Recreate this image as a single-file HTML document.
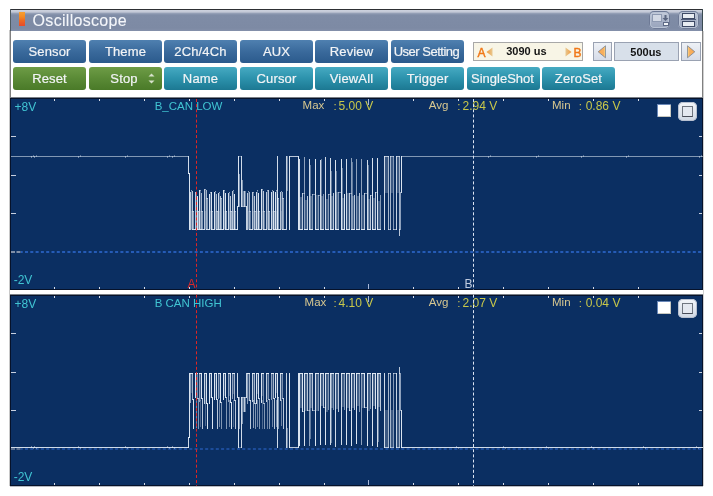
<!DOCTYPE html><html><head><meta charset="utf-8"><style>html,body{margin:0;padding:0;background:#fff;width:713px;height:496px;overflow:hidden;position:relative}#root{position:absolute;left:0;top:0;width:713px;height:496px;will-change:transform}</style></head><body><div id="root">
<div style="position:absolute;left:10px;top:9px;width:693px;height:1px;background:#2e3034"></div>
<div style="position:absolute;left:10px;top:9px;width:1px;height:22px;background:#4e5a60"></div>
<div style="position:absolute;left:10px;top:31px;width:1px;height:455px;background:#808080"></div>
<div style="position:absolute;left:702px;top:9px;width:1px;height:22px;background:#3a4a50"></div>
<div style="position:absolute;left:702px;top:31px;width:1px;height:455px;background:#808080"></div>
<div style="position:absolute;left:703px;top:31px;width:1px;height:455px;background:#d0d0d0"></div>
<div style="position:absolute;left:9px;top:30px;width:1px;height:456px;background:#c8c8c8"></div>
<div style="position:absolute;left:10px;top:486px;width:693px;height:1px;background:#b8bcc4"></div>
<div style="position:absolute;left:11px;top:10px;width:691px;height:21px;background:linear-gradient(#cdd2de 0px,#c3c8d6 2px,#939eb5 3.5px,#7f8ca6 5px,#7d8aa4 18px,#8490aa 21px)"></div>
<div style="position:absolute;left:19px;top:12px;width:6px;height:14px;background:linear-gradient(#f8a030,#f28a24 35%,#ee6a22 60%,#e84a2a)"></div>
<div style="position:absolute;left:32.60px;top:12.96px;font:normal 16px/16px 'Liberation Sans', sans-serif;color:#f4f6fa;white-space:nowrap;letter-spacing:0.3px;-webkit-text-stroke:0.1px #f4f6fa">Oscilloscope</div>
<div style="position:absolute;left:649px;top:11px;width:21px;height:18px;border-radius:5px;background:linear-gradient(#c8d0de,#a4aec4 60%,#96a2ba);box-shadow:inset 0 0 0 1px #6e7a96, inset 0 0 0 2px #b8c2d4"></div>
<div style="position:absolute;left:678px;top:11px;width:21px;height:18px;border-radius:5px;background:linear-gradient(#c8d0de,#a4aec4 60%,#96a2ba);box-shadow:inset 0 0 0 1px #6e7a96, inset 0 0 0 2px #b8c2d4"></div>
<div style="position:absolute;left:652px;top:14px;width:10px;height:8px;background:#d2d8e4;border:1px solid #8e9ab2;box-sizing:border-box"></div>
<div style="position:absolute;left:663px;top:22px;width:6px;height:4px;background:#f2f5f9;border:1px solid #5e6a86;box-sizing:border-box"></div>
<svg style="position:absolute;left:662px;top:15px" width="7" height="7"><path d="M2.5 0v3H0.5L3.5 6L6.5 3H4.5V0z" fill="#5a6680"/></svg>
<div style="position:absolute;left:682px;top:13px;width:13px;height:6px;background:#e8ecf2;border:1px solid #3e4a66;box-sizing:border-box"></div>
<div style="position:absolute;left:682px;top:21px;width:13px;height:6px;background:#e8ecf2;border:1px solid #3e4a66;box-sizing:border-box"></div>
<div style="position:absolute;left:681px;top:19px;width:15px;height:1px;background:#4e5a78"></div>
<div style="position:absolute;left:13px;top:40px;width:73px;height:23px;border-radius:3px;background:linear-gradient(#4f80b0,#3a6a9c 50%,#2b5a8c);color:#f2f4f6;font:13px/23px 'Liberation Sans', sans-serif;text-align:center;white-space:nowrap;letter-spacing:0.15px;-webkit-text-stroke:0.2px #f2f4f6;">Sensor</div>
<div style="position:absolute;left:89px;top:40px;width:73px;height:23px;border-radius:3px;background:linear-gradient(#4f80b0,#3a6a9c 50%,#2b5a8c);color:#f2f4f6;font:13px/23px 'Liberation Sans', sans-serif;text-align:center;white-space:nowrap;letter-spacing:0.15px;-webkit-text-stroke:0.2px #f2f4f6;">Theme</div>
<div style="position:absolute;left:164px;top:40px;width:73px;height:23px;border-radius:3px;background:linear-gradient(#4f80b0,#3a6a9c 50%,#2b5a8c);color:#f2f4f6;font:13px/23px 'Liberation Sans', sans-serif;text-align:center;white-space:nowrap;letter-spacing:0.15px;-webkit-text-stroke:0.2px #f2f4f6;">2Ch/4Ch</div>
<div style="position:absolute;left:240px;top:40px;width:73px;height:23px;border-radius:3px;background:linear-gradient(#4f80b0,#3a6a9c 50%,#2b5a8c);color:#f2f4f6;font:13px/23px 'Liberation Sans', sans-serif;text-align:center;white-space:nowrap;letter-spacing:0.15px;-webkit-text-stroke:0.2px #f2f4f6;">AUX</div>
<div style="position:absolute;left:315px;top:40px;width:73px;height:23px;border-radius:3px;background:linear-gradient(#4f80b0,#3a6a9c 50%,#2b5a8c);color:#f2f4f6;font:13px/23px 'Liberation Sans', sans-serif;text-align:center;white-space:nowrap;letter-spacing:0.15px;-webkit-text-stroke:0.2px #f2f4f6;">Review</div>
<div style="position:absolute;left:391px;top:40px;width:73px;height:23px;border-radius:3px;background:linear-gradient(#4f80b0,#3a6a9c 50%,#2b5a8c);color:#f2f4f6;font:13px/23px 'Liberation Sans', sans-serif;text-align:center;white-space:nowrap;letter-spacing:0.15px;-webkit-text-stroke:0.2px #f2f4f6;letter-spacing:-0.5px;text-indent:-2px">User Setting</div>
<div style="position:absolute;left:13px;top:67px;width:73px;height:23px;border-radius:3px;background:linear-gradient(#6e9c46,#5a8a36 50%,#4a7a28);color:#f2f4f6;font:13px/24px 'Liberation Sans', sans-serif;text-align:center;white-space:nowrap;letter-spacing:0.15px;-webkit-text-stroke:0.2px #f2f4f6;">Reset</div>
<div style="position:absolute;left:89px;top:67px;width:73px;height:23px;border-radius:3px;background:linear-gradient(#6e9c46,#5a8a36 50%,#4a7a28);color:#f2f4f6;font:13px/24px 'Liberation Sans', sans-serif;text-align:center;white-space:nowrap;letter-spacing:0.15px;-webkit-text-stroke:0.2px #f2f4f6;text-indent:-3px">Stop</div>
<div style="position:absolute;left:164px;top:67px;width:73px;height:23px;border-radius:3px;background:linear-gradient(#46aac2,#2c92ac 50%,#1c7892);color:#f2f4f6;font:13px/24px 'Liberation Sans', sans-serif;text-align:center;white-space:nowrap;letter-spacing:0.15px;-webkit-text-stroke:0.2px #f2f4f6;">Name</div>
<div style="position:absolute;left:240px;top:67px;width:73px;height:23px;border-radius:3px;background:linear-gradient(#46aac2,#2c92ac 50%,#1c7892);color:#f2f4f6;font:13px/24px 'Liberation Sans', sans-serif;text-align:center;white-space:nowrap;letter-spacing:0.15px;-webkit-text-stroke:0.2px #f2f4f6;">Cursor</div>
<div style="position:absolute;left:315px;top:67px;width:73px;height:23px;border-radius:3px;background:linear-gradient(#46aac2,#2c92ac 50%,#1c7892);color:#f2f4f6;font:13px/24px 'Liberation Sans', sans-serif;text-align:center;white-space:nowrap;letter-spacing:0.15px;-webkit-text-stroke:0.2px #f2f4f6;">ViewAll</div>
<div style="position:absolute;left:391px;top:67px;width:73px;height:23px;border-radius:3px;background:linear-gradient(#46aac2,#2c92ac 50%,#1c7892);color:#f2f4f6;font:13px/24px 'Liberation Sans', sans-serif;text-align:center;white-space:nowrap;letter-spacing:0.15px;-webkit-text-stroke:0.2px #f2f4f6;">Trigger</div>
<div style="position:absolute;left:467px;top:67px;width:73px;height:23px;border-radius:3px;background:linear-gradient(#46aac2,#2c92ac 50%,#1c7892);color:#f2f4f6;font:13px/24px 'Liberation Sans', sans-serif;text-align:center;white-space:nowrap;letter-spacing:0.15px;-webkit-text-stroke:0.2px #f2f4f6;letter-spacing:0px;text-indent:-2px">SingleShot</div>
<div style="position:absolute;left:542px;top:67px;width:73px;height:23px;border-radius:3px;background:linear-gradient(#46aac2,#2c92ac 50%,#1c7892);color:#f2f4f6;font:13px/24px 'Liberation Sans', sans-serif;text-align:center;white-space:nowrap;letter-spacing:0.15px;-webkit-text-stroke:0.2px #f2f4f6;">ZeroSet</div>
<svg style="position:absolute;left:148px;top:73px" width="8" height="12"><path d="M0.5 3.5L3.5 0.5L6.5 3.5z" fill="#d8e2cc"/><path d="M0.5 7.5L3.5 10.5L6.5 7.5z" fill="#d8e2cc"/></svg>
<div style="position:absolute;left:473px;top:42px;width:110px;height:19px;background:#f8f5e6;border:1px solid #a8a8a8;box-sizing:border-box"></div>
<div style="position:absolute;left:477.60px;top:46.50px;font:normal 12px/12px 'Liberation Sans', sans-serif;color:#f07818;white-space:nowrap;-webkit-text-stroke:0.45px #f07818">A</div>
<svg style="position:absolute;left:486px;top:47px" width="8" height="11"><defs><linearGradient id="ga"><stop offset="0" stop-color="#f09a40"/><stop offset="1" stop-color="#e8c890"/></linearGradient></defs><path d="M6.5 0.5L0.5 5L6.5 9.5z" fill="url(#ga)"/></svg>
<div style="position:absolute;left:506.20px;top:46.16px;font:bold 11px/11px 'Liberation Sans', sans-serif;color:#141414;white-space:nowrap;">3090 us</div>
<svg style="position:absolute;left:565px;top:47px" width="8" height="11"><defs><linearGradient id="gb"><stop offset="0" stop-color="#e8c890"/><stop offset="1" stop-color="#f09a40"/></linearGradient></defs><path d="M0.5 0.5L6.5 5L0.5 9.5z" fill="url(#gb)"/></svg>
<div style="position:absolute;left:573.50px;top:46.50px;font:normal 12px/12px 'Liberation Sans', sans-serif;color:#f07818;white-space:nowrap;-webkit-text-stroke:0.45px #f07818">B</div>
<div style="position:absolute;left:593px;top:42px;width:19px;height:19px;background:linear-gradient(#eef1f6,#d6dce8);border:1px solid #9aa2b2;box-sizing:border-box"></div>
<div style="position:absolute;left:614px;top:42px;width:65px;height:19px;background:#d8e0ea;border:1px solid #9aa2b2;box-sizing:border-box"></div>
<div style="position:absolute;left:681px;top:42px;width:20px;height:19px;background:linear-gradient(#eef1f6,#d6dce8);border:1px solid #9aa2b2;box-sizing:border-box"></div>
<svg style="position:absolute;left:597px;top:45px" width="10" height="15"><defs><linearGradient id="tl"><stop offset="0" stop-color="#f8a850"/><stop offset="0.75" stop-color="#f8b060"/><stop offset="1" stop-color="#f8e090"/></linearGradient></defs><path d="M8.5 0.8L1.2 6.8L8.5 12.8z" fill="url(#tl)" stroke="#707a8c" stroke-width="0.7"/></svg>
<svg style="position:absolute;left:686px;top:45px" width="10" height="15"><defs><linearGradient id="tr"><stop offset="0" stop-color="#f8e090"/><stop offset="0.25" stop-color="#f8b060"/><stop offset="1" stop-color="#f8a850"/></linearGradient></defs><path d="M1.5 0.8L8.8 6.8L1.5 12.8z" fill="url(#tr)" stroke="#707a8c" stroke-width="0.7"/></svg>
<div style="position:absolute;left:630.30px;top:46.86px;font:bold 11px/11px 'Liberation Sans', sans-serif;color:#141414;white-space:nowrap;">500us</div>
<div style="position:absolute;left:10px;top:97px;width:693px;height:1px;background:#7a8088"></div>
<div style="position:absolute;left:10px;top:98px;width:693px;height:192px;background:#0b2f62;box-shadow:inset 1px 1px 0 #06122a, inset -1px -1px 0 #06122a"></div>
<div style="position:absolute;left:14.60px;top:100.70px;font:normal 12px/12px 'Liberation Sans', sans-serif;color:#40c4d2;white-space:nowrap;">+8V</div>
<div style="position:absolute;left:13.70px;top:274.30px;font:normal 12px/12px 'Liberation Sans', sans-serif;color:#40c4d2;white-space:nowrap;">-2V</div>
<div style="position:absolute;left:154.70px;top:100.78px;font:normal 11.5px/11.5px 'Liberation Sans', sans-serif;color:#40c4d2;white-space:nowrap;">B_CAN LOW</div>
<div style="position:absolute;left:302.60px;top:100.18px;font:normal 11.5px/11.5px 'Liberation Sans', sans-serif;color:#d8c890;white-space:nowrap;">Max</div>
<div style="position:absolute;left:333.50px;top:101.18px;font:normal 11.5px/11.5px 'Liberation Sans', sans-serif;color:#c8c050;white-space:nowrap;">:</div>
<div style="position:absolute;left:338.60px;top:100.10px;font:normal 12px/12px 'Liberation Sans', sans-serif;color:#c8c84a;white-space:nowrap;">5.00 V</div>
<div style="position:absolute;left:428.80px;top:100.18px;font:normal 11.5px/11.5px 'Liberation Sans', sans-serif;color:#d8c890;white-space:nowrap;">Avg</div>
<div style="position:absolute;left:457.20px;top:101.18px;font:normal 11.5px/11.5px 'Liberation Sans', sans-serif;color:#c8c050;white-space:nowrap;">:</div>
<div style="position:absolute;left:462.60px;top:100.10px;font:normal 12px/12px 'Liberation Sans', sans-serif;color:#c8c84a;white-space:nowrap;">2.94 V</div>
<div style="position:absolute;left:552.00px;top:100.18px;font:normal 11.5px/11.5px 'Liberation Sans', sans-serif;color:#d8c890;white-space:nowrap;">Min</div>
<div style="position:absolute;left:578.80px;top:101.18px;font:normal 11.5px/11.5px 'Liberation Sans', sans-serif;color:#c8c050;white-space:nowrap;">:</div>
<div style="position:absolute;left:585.70px;top:100.10px;font:normal 12px/12px 'Liberation Sans', sans-serif;color:#c8c84a;white-space:nowrap;">0.86 V</div>
<div style="position:absolute;left:657px;top:104px;width:14px;height:13px;background:#fff;box-shadow:inset 1px 1px 0 #6a88b8, inset -1px -1px 0 #c8c8c0"></div>
<div style="position:absolute;left:678px;top:102px;width:19px;height:19px;border-radius:5px;background:linear-gradient(#f4f6fa,#d0d8e4);box-shadow:inset 0 0 0 1px #b8c0d0"></div>
<div style="position:absolute;left:682px;top:106px;width:11px;height:11px;background:#e4e8f0;border:1px solid #707680;border-bottom-color:#484c58;box-sizing:border-box"></div>
<div style="position:absolute;left:10px;top:294px;width:693px;height:1px;background:#7a8088"></div>
<div style="position:absolute;left:10px;top:295px;width:693px;height:191px;background:#0b2f62;box-shadow:inset 1px 1px 0 #06122a, inset -1px -1px 0 #06122a"></div>
<div style="position:absolute;left:14.60px;top:297.70px;font:normal 12px/12px 'Liberation Sans', sans-serif;color:#40c4d2;white-space:nowrap;">+8V</div>
<div style="position:absolute;left:13.70px;top:471.30px;font:normal 12px/12px 'Liberation Sans', sans-serif;color:#40c4d2;white-space:nowrap;">-2V</div>
<div style="position:absolute;left:154.70px;top:297.78px;font:normal 11.5px/11.5px 'Liberation Sans', sans-serif;color:#40c4d2;white-space:nowrap;">B CAN HIGH</div>
<div style="position:absolute;left:304.60px;top:297.18px;font:normal 11.5px/11.5px 'Liberation Sans', sans-serif;color:#d8c890;white-space:nowrap;">Max</div>
<div style="position:absolute;left:333.50px;top:298.18px;font:normal 11.5px/11.5px 'Liberation Sans', sans-serif;color:#c8c050;white-space:nowrap;">:</div>
<div style="position:absolute;left:338.60px;top:297.10px;font:normal 12px/12px 'Liberation Sans', sans-serif;color:#c8c84a;white-space:nowrap;">4.10 V</div>
<div style="position:absolute;left:428.80px;top:297.18px;font:normal 11.5px/11.5px 'Liberation Sans', sans-serif;color:#d8c890;white-space:nowrap;">Avg</div>
<div style="position:absolute;left:457.20px;top:298.18px;font:normal 11.5px/11.5px 'Liberation Sans', sans-serif;color:#c8c050;white-space:nowrap;">:</div>
<div style="position:absolute;left:462.60px;top:297.10px;font:normal 12px/12px 'Liberation Sans', sans-serif;color:#c8c84a;white-space:nowrap;">2.07 V</div>
<div style="position:absolute;left:552.00px;top:297.18px;font:normal 11.5px/11.5px 'Liberation Sans', sans-serif;color:#d8c890;white-space:nowrap;">Min</div>
<div style="position:absolute;left:578.80px;top:298.18px;font:normal 11.5px/11.5px 'Liberation Sans', sans-serif;color:#c8c050;white-space:nowrap;">:</div>
<div style="position:absolute;left:585.70px;top:297.10px;font:normal 12px/12px 'Liberation Sans', sans-serif;color:#c8c84a;white-space:nowrap;">0.04 V</div>
<div style="position:absolute;left:657px;top:301px;width:14px;height:13px;background:#fff;box-shadow:inset 1px 1px 0 #6a88b8, inset -1px -1px 0 #c8c8c0"></div>
<div style="position:absolute;left:678px;top:299px;width:19px;height:19px;border-radius:5px;background:linear-gradient(#f4f6fa,#d0d8e4);box-shadow:inset 0 0 0 1px #b8c0d0"></div>
<div style="position:absolute;left:682px;top:303px;width:11px;height:11px;background:#e4e8f0;border:1px solid #707680;border-bottom-color:#484c58;box-sizing:border-box"></div>
<div style="position:absolute;left:10px;top:290px;width:693px;height:4px;background:#ffffff"></div>
<svg style="position:absolute;left:0;top:0" width="713" height="496"><rect x="54" y="99" width="1" height="2" fill="#d8dde8"/><rect x="54" y="287" width="1" height="2" fill="#d8dde8"/><rect x="99" y="99" width="1" height="2" fill="#d8dde8"/><rect x="99" y="287" width="1" height="2" fill="#d8dde8"/><rect x="144" y="99" width="1" height="2" fill="#d8dde8"/><rect x="144" y="287" width="1" height="2" fill="#d8dde8"/><rect x="189" y="99" width="1" height="2" fill="#d8dde8"/><rect x="189" y="287" width="1" height="2" fill="#d8dde8"/><rect x="234" y="99" width="1" height="2" fill="#d8dde8"/><rect x="234" y="287" width="1" height="2" fill="#d8dde8"/><rect x="279" y="99" width="1" height="2" fill="#d8dde8"/><rect x="279" y="287" width="1" height="2" fill="#d8dde8"/><rect x="324" y="99" width="1" height="2" fill="#d8dde8"/><rect x="324" y="287" width="1" height="2" fill="#d8dde8"/><rect x="368" y="99" width="1" height="6" fill="#a8b8d8"/><rect x="368" y="284" width="1" height="5" fill="#a8b8d8"/><rect x="413" y="99" width="1" height="2" fill="#d8dde8"/><rect x="413" y="287" width="1" height="2" fill="#d8dde8"/><rect x="458" y="99" width="1" height="2" fill="#d8dde8"/><rect x="458" y="287" width="1" height="2" fill="#d8dde8"/><rect x="503" y="99" width="1" height="2" fill="#d8dde8"/><rect x="503" y="287" width="1" height="2" fill="#d8dde8"/><rect x="548" y="99" width="1" height="2" fill="#d8dde8"/><rect x="548" y="287" width="1" height="2" fill="#d8dde8"/><rect x="593" y="99" width="1" height="2" fill="#d8dde8"/><rect x="593" y="287" width="1" height="2" fill="#d8dde8"/><rect x="638" y="99" width="1" height="2" fill="#d8dde8"/><rect x="638" y="287" width="1" height="2" fill="#d8dde8"/><rect x="11" y="136" width="5" height="1" fill="#c8d0e0"/><rect x="699" y="136" width="3" height="1" fill="#c8d0e0"/><rect x="11" y="175" width="5" height="1" fill="#c8d0e0"/><rect x="699" y="175" width="3" height="1" fill="#c8d0e0"/><rect x="11" y="213" width="5" height="1" fill="#c8d0e0"/><rect x="699" y="213" width="3" height="1" fill="#c8d0e0"/><line x1="21" y1="252" x2="703" y2="252" stroke="#2f6bd2" stroke-width="1.5" stroke-dasharray="3 2.3" stroke-dashoffset="1.3"/><line x1="11" y1="252" x2="21" y2="252" stroke="#a8b0c0" stroke-width="1.5" stroke-dasharray="4 1.5"/><rect x="54" y="296" width="1" height="2" fill="#d8dde8"/><rect x="54" y="483" width="1" height="2" fill="#d8dde8"/><rect x="99" y="296" width="1" height="2" fill="#d8dde8"/><rect x="99" y="483" width="1" height="2" fill="#d8dde8"/><rect x="144" y="296" width="1" height="2" fill="#d8dde8"/><rect x="144" y="483" width="1" height="2" fill="#d8dde8"/><rect x="189" y="296" width="1" height="2" fill="#d8dde8"/><rect x="189" y="483" width="1" height="2" fill="#d8dde8"/><rect x="234" y="296" width="1" height="2" fill="#d8dde8"/><rect x="234" y="483" width="1" height="2" fill="#d8dde8"/><rect x="279" y="296" width="1" height="2" fill="#d8dde8"/><rect x="279" y="483" width="1" height="2" fill="#d8dde8"/><rect x="324" y="296" width="1" height="2" fill="#d8dde8"/><rect x="324" y="483" width="1" height="2" fill="#d8dde8"/><rect x="368" y="296" width="1" height="6" fill="#a8b8d8"/><rect x="368" y="480" width="1" height="5" fill="#a8b8d8"/><rect x="413" y="296" width="1" height="2" fill="#d8dde8"/><rect x="413" y="483" width="1" height="2" fill="#d8dde8"/><rect x="458" y="296" width="1" height="2" fill="#d8dde8"/><rect x="458" y="483" width="1" height="2" fill="#d8dde8"/><rect x="503" y="296" width="1" height="2" fill="#d8dde8"/><rect x="503" y="483" width="1" height="2" fill="#d8dde8"/><rect x="548" y="296" width="1" height="2" fill="#d8dde8"/><rect x="548" y="483" width="1" height="2" fill="#d8dde8"/><rect x="593" y="296" width="1" height="2" fill="#d8dde8"/><rect x="593" y="483" width="1" height="2" fill="#d8dde8"/><rect x="638" y="296" width="1" height="2" fill="#d8dde8"/><rect x="638" y="483" width="1" height="2" fill="#d8dde8"/><rect x="11" y="333" width="5" height="1" fill="#c8d0e0"/><rect x="699" y="333" width="3" height="1" fill="#c8d0e0"/><rect x="11" y="372" width="5" height="1" fill="#c8d0e0"/><rect x="699" y="372" width="3" height="1" fill="#c8d0e0"/><rect x="11" y="410" width="5" height="1" fill="#c8d0e0"/><rect x="699" y="410" width="3" height="1" fill="#c8d0e0"/><line x1="21" y1="449" x2="703" y2="449" stroke="#2f6bd2" stroke-width="1.2" stroke-dasharray="3 2.3" stroke-dashoffset="1.3"/><line x1="11" y1="449" x2="21" y2="449" stroke="#a8b0c0" stroke-width="1.2" stroke-dasharray="4 1.5"/><g fill="#e6eef8" shape-rendering="crispEdges"><rect x="11" y="156" width="178" height="1" fill-opacity="0.55"/><rect x="31" y="156" width="1" height="2" fill-opacity="0.45"/><rect x="33" y="155" width="1" height="2" fill-opacity="0.35"/><rect x="34" y="156" width="1" height="2" fill-opacity="0.45"/><rect x="36" y="155" width="1" height="2" fill-opacity="0.35"/><rect x="78" y="156" width="1" height="2" fill-opacity="0.45"/><rect x="80" y="155" width="1" height="2" fill-opacity="0.35"/><rect x="125" y="156" width="1" height="2" fill-opacity="0.45"/><rect x="127" y="155" width="1" height="2" fill-opacity="0.35"/><rect x="167" y="156" width="1" height="2" fill-opacity="0.45"/><rect x="169" y="155" width="1" height="2" fill-opacity="0.35"/><rect x="172" y="156" width="1" height="2" fill-opacity="0.45"/><rect x="174" y="155" width="1" height="2" fill-opacity="0.35"/><rect x="188" y="156" width="1" height="18" fill-opacity="0.90"/><rect x="188" y="173" width="2" height="1" fill-opacity="0.90"/><rect x="189" y="173" width="1" height="57" fill-opacity="0.95"/><rect x="190" y="192" width="1" height="38" fill-opacity="0.80"/><rect x="192" y="191" width="1" height="39" fill-opacity="0.80"/><rect x="191" y="190" width="1" height="1" fill-opacity="0.60"/><rect x="191" y="191" width="1" height="39" fill-opacity="0.30"/><rect x="192" y="229" width="4" height="1" fill-opacity="0.90"/><rect x="193" y="211" width="1" height="18" fill-opacity="0.55"/><rect x="192" y="211" width="2" height="1" fill-opacity="0.45"/><rect x="191" y="211" width="1" height="18" fill-opacity="0.20"/><rect x="195" y="192" width="1" height="38" fill-opacity="0.80"/><rect x="197" y="196" width="1" height="34" fill-opacity="0.95"/><rect x="196" y="192" width="1" height="1" fill-opacity="0.60"/><rect x="196" y="193" width="1" height="37" fill-opacity="0.30"/><rect x="197" y="229" width="4" height="1" fill-opacity="0.90"/><rect x="198" y="211" width="1" height="18" fill-opacity="0.55"/><rect x="197" y="211" width="2" height="1" fill-opacity="0.45"/><rect x="196" y="211" width="1" height="18" fill-opacity="0.20"/><rect x="199" y="190" width="1" height="40" fill-opacity="0.95"/><rect x="201" y="193" width="1" height="37" fill-opacity="0.70"/><rect x="200" y="190" width="1" height="1" fill-opacity="0.60"/><rect x="200" y="191" width="1" height="39" fill-opacity="0.30"/><rect x="201" y="229" width="4" height="1" fill-opacity="0.90"/><rect x="202" y="211" width="1" height="18" fill-opacity="0.55"/><rect x="201" y="211" width="2" height="1" fill-opacity="0.45"/><rect x="200" y="211" width="1" height="18" fill-opacity="0.20"/><rect x="204" y="189" width="1" height="41" fill-opacity="0.80"/><rect x="206" y="190" width="1" height="40" fill-opacity="0.70"/><rect x="205" y="189" width="1" height="1" fill-opacity="0.60"/><rect x="205" y="190" width="1" height="40" fill-opacity="0.30"/><rect x="206" y="229" width="4" height="1" fill-opacity="0.90"/><rect x="207" y="198" width="1" height="31" fill-opacity="0.55"/><rect x="206" y="198" width="2" height="1" fill-opacity="0.45"/><rect x="205" y="211" width="1" height="18" fill-opacity="0.20"/><rect x="209" y="194" width="1" height="36" fill-opacity="0.95"/><rect x="211" y="192" width="1" height="38" fill-opacity="0.95"/><rect x="210" y="192" width="1" height="1" fill-opacity="0.60"/><rect x="210" y="193" width="1" height="37" fill-opacity="0.30"/><rect x="211" y="229" width="4" height="1" fill-opacity="0.90"/><rect x="212" y="211" width="1" height="18" fill-opacity="0.40"/><rect x="211" y="211" width="2" height="1" fill-opacity="0.45"/><rect x="210" y="211" width="1" height="18" fill-opacity="0.20"/><rect x="214" y="192" width="1" height="38" fill-opacity="0.95"/><rect x="216" y="194" width="1" height="36" fill-opacity="0.70"/><rect x="215" y="191" width="1" height="1" fill-opacity="0.60"/><rect x="215" y="192" width="1" height="38" fill-opacity="0.30"/><rect x="216" y="229" width="4" height="1" fill-opacity="0.90"/><rect x="217" y="211" width="1" height="18" fill-opacity="0.55"/><rect x="216" y="211" width="2" height="1" fill-opacity="0.45"/><rect x="215" y="211" width="1" height="18" fill-opacity="0.20"/><rect x="218" y="193" width="1" height="37" fill-opacity="0.90"/><rect x="220" y="196" width="1" height="34" fill-opacity="0.80"/><rect x="219" y="192" width="1" height="1" fill-opacity="0.60"/><rect x="219" y="193" width="1" height="37" fill-opacity="0.30"/><rect x="220" y="229" width="4" height="1" fill-opacity="0.90"/><rect x="221" y="198" width="1" height="31" fill-opacity="0.55"/><rect x="220" y="198" width="2" height="1" fill-opacity="0.45"/><rect x="219" y="211" width="1" height="18" fill-opacity="0.20"/><rect x="223" y="190" width="1" height="40" fill-opacity="0.95"/><rect x="225" y="193" width="1" height="37" fill-opacity="0.95"/><rect x="224" y="190" width="1" height="1" fill-opacity="0.60"/><rect x="224" y="191" width="1" height="39" fill-opacity="0.30"/><rect x="225" y="229" width="4" height="1" fill-opacity="0.90"/><rect x="226" y="211" width="1" height="18" fill-opacity="0.55"/><rect x="225" y="211" width="2" height="1" fill-opacity="0.45"/><rect x="224" y="211" width="1" height="18" fill-opacity="0.20"/><rect x="228" y="193" width="1" height="37" fill-opacity="0.90"/><rect x="230" y="196" width="1" height="34" fill-opacity="0.80"/><rect x="229" y="192" width="1" height="1" fill-opacity="0.60"/><rect x="229" y="193" width="1" height="37" fill-opacity="0.30"/><rect x="230" y="229" width="4" height="1" fill-opacity="0.90"/><rect x="231" y="211" width="1" height="18" fill-opacity="0.55"/><rect x="230" y="211" width="2" height="1" fill-opacity="0.45"/><rect x="229" y="211" width="1" height="18" fill-opacity="0.20"/><rect x="232" y="191" width="1" height="39" fill-opacity="0.80"/><rect x="234" y="194" width="1" height="36" fill-opacity="0.95"/><rect x="233" y="190" width="1" height="1" fill-opacity="0.60"/><rect x="233" y="191" width="1" height="39" fill-opacity="0.30"/><rect x="234" y="229" width="4" height="1" fill-opacity="0.90"/><rect x="235" y="211" width="1" height="18" fill-opacity="0.40"/><rect x="234" y="211" width="2" height="1" fill-opacity="0.45"/><rect x="233" y="211" width="1" height="18" fill-opacity="0.20"/><rect x="237" y="206" width="1" height="24" fill-opacity="0.90"/><rect x="238" y="156" width="1" height="51" fill-opacity="0.95"/><rect x="241" y="156" width="1" height="51" fill-opacity="0.90"/><rect x="238" y="156" width="4" height="1" fill-opacity="0.35"/><rect x="239" y="174" width="1" height="33" fill-opacity="0.50"/><rect x="242" y="180" width="1" height="27" fill-opacity="0.55"/><rect x="243" y="191" width="3" height="16" fill-opacity="0.40"/><rect x="244" y="191" width="1" height="16" fill-opacity="0.70"/><rect x="241" y="206" width="6" height="1" fill-opacity="0.45"/><rect x="246" y="206" width="1" height="24" fill-opacity="0.85"/><rect x="247" y="193" width="1" height="37" fill-opacity="0.80"/><rect x="249" y="192" width="1" height="38" fill-opacity="0.70"/><rect x="248" y="191" width="1" height="1" fill-opacity="0.60"/><rect x="248" y="192" width="1" height="38" fill-opacity="0.30"/><rect x="249" y="229" width="4" height="1" fill-opacity="0.90"/><rect x="250" y="211" width="1" height="18" fill-opacity="0.40"/><rect x="249" y="211" width="2" height="1" fill-opacity="0.45"/><rect x="248" y="211" width="1" height="18" fill-opacity="0.20"/><rect x="252" y="192" width="1" height="38" fill-opacity="0.80"/><rect x="254" y="196" width="1" height="34" fill-opacity="0.80"/><rect x="253" y="192" width="1" height="1" fill-opacity="0.60"/><rect x="253" y="193" width="1" height="37" fill-opacity="0.30"/><rect x="254" y="229" width="4" height="1" fill-opacity="0.90"/><rect x="255" y="211" width="1" height="18" fill-opacity="0.40"/><rect x="254" y="211" width="2" height="1" fill-opacity="0.45"/><rect x="253" y="211" width="1" height="18" fill-opacity="0.20"/><rect x="256" y="192" width="1" height="38" fill-opacity="0.90"/><rect x="258" y="193" width="1" height="37" fill-opacity="0.95"/><rect x="257" y="190" width="1" height="1" fill-opacity="0.60"/><rect x="257" y="191" width="1" height="39" fill-opacity="0.30"/><rect x="258" y="229" width="4" height="1" fill-opacity="0.90"/><rect x="259" y="211" width="1" height="18" fill-opacity="0.40"/><rect x="258" y="211" width="2" height="1" fill-opacity="0.45"/><rect x="257" y="211" width="1" height="18" fill-opacity="0.20"/><rect x="261" y="189" width="1" height="41" fill-opacity="0.95"/><rect x="263" y="191" width="1" height="39" fill-opacity="0.80"/><rect x="262" y="189" width="1" height="1" fill-opacity="0.60"/><rect x="262" y="190" width="1" height="40" fill-opacity="0.30"/><rect x="263" y="229" width="4" height="1" fill-opacity="0.90"/><rect x="264" y="211" width="1" height="18" fill-opacity="0.40"/><rect x="263" y="211" width="2" height="1" fill-opacity="0.45"/><rect x="262" y="211" width="1" height="18" fill-opacity="0.20"/><rect x="266" y="192" width="1" height="38" fill-opacity="0.80"/><rect x="268" y="190" width="1" height="40" fill-opacity="0.80"/><rect x="267" y="190" width="1" height="1" fill-opacity="0.60"/><rect x="267" y="191" width="1" height="39" fill-opacity="0.30"/><rect x="268" y="229" width="4" height="1" fill-opacity="0.90"/><rect x="269" y="211" width="1" height="18" fill-opacity="0.55"/><rect x="268" y="211" width="2" height="1" fill-opacity="0.45"/><rect x="267" y="211" width="1" height="18" fill-opacity="0.20"/><rect x="271" y="192" width="1" height="38" fill-opacity="0.90"/><rect x="273" y="191" width="1" height="39" fill-opacity="0.95"/><rect x="272" y="190" width="1" height="1" fill-opacity="0.60"/><rect x="272" y="191" width="1" height="39" fill-opacity="0.30"/><rect x="273" y="229" width="4" height="1" fill-opacity="0.90"/><rect x="274" y="211" width="1" height="18" fill-opacity="0.40"/><rect x="273" y="211" width="2" height="1" fill-opacity="0.45"/><rect x="272" y="211" width="1" height="18" fill-opacity="0.20"/><rect x="275" y="192" width="1" height="38" fill-opacity="0.95"/><rect x="277" y="194" width="1" height="36" fill-opacity="0.95"/><rect x="276" y="190" width="1" height="1" fill-opacity="0.60"/><rect x="276" y="191" width="1" height="39" fill-opacity="0.30"/><rect x="277" y="229" width="4" height="1" fill-opacity="0.90"/><rect x="278" y="198" width="1" height="31" fill-opacity="0.55"/><rect x="277" y="198" width="2" height="1" fill-opacity="0.45"/><rect x="276" y="211" width="1" height="18" fill-opacity="0.20"/><rect x="280" y="192" width="1" height="38" fill-opacity="0.80"/><rect x="282" y="192" width="1" height="38" fill-opacity="0.70"/><rect x="281" y="191" width="1" height="1" fill-opacity="0.60"/><rect x="281" y="192" width="1" height="38" fill-opacity="0.30"/><rect x="282" y="229" width="4" height="1" fill-opacity="0.90"/><rect x="283" y="198" width="1" height="31" fill-opacity="0.55"/><rect x="282" y="198" width="2" height="1" fill-opacity="0.45"/><rect x="281" y="211" width="1" height="18" fill-opacity="0.20"/><rect x="277" y="156" width="1" height="74" fill-opacity="0.90"/><rect x="286" y="156" width="1" height="74" fill-opacity="0.85"/><rect x="287" y="156" width="1" height="35" fill-opacity="0.45"/><rect x="289" y="156" width="1" height="74" fill-opacity="0.95"/><rect x="289" y="156" width="9" height="1" fill-opacity="0.80"/><rect x="298" y="156" width="1" height="74" fill-opacity="0.95"/><rect x="299" y="229" width="4" height="1" fill-opacity="0.95"/><rect x="299" y="159" width="1" height="71" fill-opacity="0.90"/><rect x="302" y="193" width="1" height="37" fill-opacity="0.80"/><rect x="300" y="197" width="2" height="32" fill-opacity="0.25"/><rect x="302" y="193" width="3" height="1" fill-opacity="0.45"/><rect x="304" y="229" width="4" height="1" fill-opacity="0.95"/><rect x="304" y="157" width="1" height="73" fill-opacity="0.60"/><rect x="307" y="196" width="1" height="34" fill-opacity="0.80"/><rect x="305" y="200" width="2" height="29" fill-opacity="0.25"/><rect x="309" y="229" width="4" height="1" fill-opacity="0.95"/><rect x="309" y="159" width="1" height="71" fill-opacity="0.90"/><rect x="312" y="194" width="1" height="36" fill-opacity="0.55"/><rect x="310" y="196" width="2" height="33" fill-opacity="0.25"/><rect x="312" y="194" width="3" height="1" fill-opacity="0.45"/><rect x="310" y="165" width="1" height="65" fill-opacity="0.40"/><rect x="315" y="229" width="4" height="1" fill-opacity="0.95"/><rect x="315" y="159" width="1" height="71" fill-opacity="0.95"/><rect x="318" y="195" width="1" height="35" fill-opacity="0.55"/><rect x="316" y="195" width="2" height="34" fill-opacity="0.25"/><rect x="318" y="195" width="3" height="1" fill-opacity="0.45"/><rect x="320" y="229" width="4" height="1" fill-opacity="0.95"/><rect x="320" y="160" width="1" height="70" fill-opacity="0.90"/><rect x="323" y="194" width="1" height="36" fill-opacity="0.55"/><rect x="321" y="196" width="2" height="33" fill-opacity="0.25"/><rect x="321" y="159" width="1" height="71" fill-opacity="0.40"/><rect x="325" y="229" width="4" height="1" fill-opacity="0.95"/><rect x="325" y="157" width="1" height="73" fill-opacity="0.90"/><rect x="328" y="194" width="1" height="36" fill-opacity="0.55"/><rect x="326" y="199" width="2" height="30" fill-opacity="0.25"/><rect x="328" y="194" width="3" height="1" fill-opacity="0.45"/><rect x="330" y="229" width="4" height="1" fill-opacity="0.95"/><rect x="330" y="158" width="1" height="72" fill-opacity="0.90"/><rect x="333" y="193" width="1" height="37" fill-opacity="0.80"/><rect x="331" y="196" width="2" height="33" fill-opacity="0.25"/><rect x="331" y="171" width="1" height="59" fill-opacity="0.40"/><rect x="335" y="229" width="4" height="1" fill-opacity="0.95"/><rect x="335" y="160" width="1" height="70" fill-opacity="0.95"/><rect x="338" y="192" width="1" height="38" fill-opacity="0.55"/><rect x="336" y="192" width="2" height="37" fill-opacity="0.25"/><rect x="338" y="192" width="3" height="1" fill-opacity="0.45"/><rect x="336" y="171" width="1" height="59" fill-opacity="0.40"/><rect x="341" y="229" width="4" height="1" fill-opacity="0.95"/><rect x="341" y="159" width="1" height="71" fill-opacity="0.95"/><rect x="344" y="194" width="1" height="36" fill-opacity="0.95"/><rect x="342" y="198" width="2" height="31" fill-opacity="0.25"/><rect x="342" y="168" width="1" height="62" fill-opacity="0.40"/><rect x="346" y="229" width="4" height="1" fill-opacity="0.95"/><rect x="346" y="159" width="1" height="71" fill-opacity="0.90"/><rect x="349" y="193" width="1" height="37" fill-opacity="0.80"/><rect x="347" y="193" width="2" height="36" fill-opacity="0.25"/><rect x="349" y="193" width="3" height="1" fill-opacity="0.45"/><rect x="351" y="229" width="4" height="1" fill-opacity="0.95"/><rect x="351" y="158" width="1" height="72" fill-opacity="0.60"/><rect x="354" y="195" width="1" height="35" fill-opacity="0.80"/><rect x="352" y="196" width="2" height="33" fill-opacity="0.25"/><rect x="352" y="162" width="1" height="68" fill-opacity="0.40"/><rect x="356" y="229" width="4" height="1" fill-opacity="0.95"/><rect x="356" y="159" width="1" height="71" fill-opacity="0.60"/><rect x="359" y="193" width="1" height="37" fill-opacity="0.80"/><rect x="357" y="196" width="2" height="33" fill-opacity="0.25"/><rect x="361" y="229" width="4" height="1" fill-opacity="0.95"/><rect x="361" y="159" width="1" height="71" fill-opacity="0.60"/><rect x="364" y="193" width="1" height="37" fill-opacity="0.80"/><rect x="362" y="195" width="2" height="34" fill-opacity="0.25"/><rect x="364" y="193" width="3" height="1" fill-opacity="0.45"/><rect x="367" y="229" width="4" height="1" fill-opacity="0.95"/><rect x="367" y="160" width="1" height="70" fill-opacity="0.90"/><rect x="370" y="195" width="1" height="35" fill-opacity="0.80"/><rect x="368" y="199" width="2" height="30" fill-opacity="0.25"/><rect x="370" y="195" width="3" height="1" fill-opacity="0.45"/><rect x="368" y="165" width="1" height="65" fill-opacity="0.40"/><rect x="372" y="229" width="4" height="1" fill-opacity="0.95"/><rect x="372" y="158" width="1" height="72" fill-opacity="0.95"/><rect x="375" y="192" width="1" height="38" fill-opacity="0.80"/><rect x="373" y="198" width="2" height="31" fill-opacity="0.25"/><rect x="375" y="192" width="3" height="1" fill-opacity="0.45"/><rect x="377" y="229" width="4" height="1" fill-opacity="0.95"/><rect x="377" y="158" width="1" height="72" fill-opacity="0.95"/><rect x="380" y="195" width="1" height="35" fill-opacity="0.55"/><rect x="378" y="201" width="2" height="28" fill-opacity="0.25"/><rect x="384" y="156" width="5" height="1" fill-opacity="0.72"/><rect x="384" y="156" width="1" height="74" fill-opacity="0.90"/><rect x="388" y="156" width="1" height="74" fill-opacity="0.72"/><rect x="385" y="156" width="3" height="37" fill-opacity="0.22"/><rect x="390" y="156" width="4" height="1" fill-opacity="0.56"/><rect x="390" y="156" width="1" height="74" fill-opacity="0.70"/><rect x="393" y="156" width="1" height="74" fill-opacity="0.56"/><rect x="391" y="156" width="2" height="37" fill-opacity="0.22"/><rect x="396" y="156" width="4" height="1" fill-opacity="0.68"/><rect x="396" y="156" width="1" height="74" fill-opacity="0.85"/><rect x="399" y="156" width="1" height="74" fill-opacity="0.68"/><rect x="397" y="156" width="2" height="37" fill-opacity="0.22"/><rect x="388" y="229" width="3" height="1" fill-opacity="0.60"/><rect x="393" y="229" width="4" height="1" fill-opacity="0.60"/><rect x="399" y="229" width="1" height="7" fill-opacity="0.80"/><rect x="401" y="156" width="1" height="37" fill-opacity="0.95"/><rect x="400" y="192" width="1" height="38" fill-opacity="0.60"/><rect x="401" y="156" width="302" height="1" fill-opacity="0.55"/><rect x="488" y="156" width="1" height="2" fill-opacity="0.45"/><rect x="490" y="155" width="1" height="2" fill-opacity="0.35"/><rect x="536" y="156" width="1" height="2" fill-opacity="0.45"/><rect x="538" y="155" width="1" height="2" fill-opacity="0.35"/><rect x="581" y="156" width="1" height="2" fill-opacity="0.45"/><rect x="583" y="155" width="1" height="2" fill-opacity="0.35"/><rect x="626" y="156" width="1" height="2" fill-opacity="0.45"/><rect x="628" y="155" width="1" height="2" fill-opacity="0.35"/><rect x="699" y="156" width="1" height="2" fill-opacity="0.45"/><rect x="701" y="155" width="1" height="2" fill-opacity="0.35"/><rect x="11" y="447" width="178" height="1" fill-opacity="0.90"/><rect x="31" y="446" width="1" height="2" fill-opacity="0.45"/><rect x="33" y="447" width="1" height="2" fill-opacity="0.35"/><rect x="34" y="446" width="1" height="2" fill-opacity="0.45"/><rect x="36" y="447" width="1" height="2" fill-opacity="0.35"/><rect x="78" y="446" width="1" height="2" fill-opacity="0.45"/><rect x="80" y="447" width="1" height="2" fill-opacity="0.35"/><rect x="125" y="446" width="1" height="2" fill-opacity="0.45"/><rect x="127" y="447" width="1" height="2" fill-opacity="0.35"/><rect x="167" y="446" width="1" height="2" fill-opacity="0.45"/><rect x="169" y="447" width="1" height="2" fill-opacity="0.35"/><rect x="172" y="446" width="1" height="2" fill-opacity="0.45"/><rect x="174" y="447" width="1" height="2" fill-opacity="0.35"/><rect x="188" y="437" width="1" height="11" fill-opacity="0.90"/><rect x="188" y="437" width="2" height="1" fill-opacity="0.90"/><rect x="189" y="373" width="1" height="65" fill-opacity="0.95"/><rect x="190" y="373" width="3" height="1" fill-opacity="0.95"/><rect x="190" y="373" width="1" height="30" fill-opacity="0.60"/><rect x="192" y="373" width="1" height="27" fill-opacity="0.70"/><rect x="191" y="374" width="1" height="19" fill-opacity="0.22"/><rect x="193" y="399" width="1" height="30" fill-opacity="0.95"/><rect x="192" y="399" width="2" height="1" fill-opacity="0.50"/><rect x="195" y="373" width="3" height="1" fill-opacity="0.95"/><rect x="195" y="373" width="1" height="25" fill-opacity="0.95"/><rect x="197" y="373" width="1" height="26" fill-opacity="0.50"/><rect x="196" y="374" width="1" height="26" fill-opacity="0.22"/><rect x="198" y="398" width="1" height="31" fill-opacity="0.55"/><rect x="197" y="398" width="2" height="1" fill-opacity="0.50"/><rect x="196" y="400" width="1" height="28" fill-opacity="0.45"/><rect x="199" y="373" width="3" height="1" fill-opacity="0.95"/><rect x="199" y="373" width="1" height="29" fill-opacity="0.60"/><rect x="201" y="373" width="1" height="26" fill-opacity="0.95"/><rect x="200" y="374" width="1" height="27" fill-opacity="0.22"/><rect x="202" y="398" width="1" height="31" fill-opacity="0.80"/><rect x="201" y="398" width="2" height="1" fill-opacity="0.50"/><rect x="200" y="400" width="1" height="27" fill-opacity="0.30"/><rect x="204" y="373" width="3" height="1" fill-opacity="0.95"/><rect x="204" y="373" width="1" height="31" fill-opacity="0.85"/><rect x="206" y="373" width="1" height="31" fill-opacity="0.95"/><rect x="205" y="374" width="1" height="26" fill-opacity="0.22"/><rect x="207" y="403" width="1" height="26" fill-opacity="0.95"/><rect x="206" y="403" width="2" height="1" fill-opacity="0.50"/><rect x="205" y="400" width="1" height="26" fill-opacity="0.30"/><rect x="209" y="373" width="3" height="1" fill-opacity="0.95"/><rect x="209" y="373" width="1" height="31" fill-opacity="0.95"/><rect x="211" y="373" width="1" height="25" fill-opacity="0.95"/><rect x="210" y="374" width="1" height="24" fill-opacity="0.22"/><rect x="212" y="397" width="1" height="32" fill-opacity="0.95"/><rect x="211" y="397" width="2" height="1" fill-opacity="0.50"/><rect x="214" y="373" width="3" height="1" fill-opacity="0.95"/><rect x="214" y="373" width="1" height="27" fill-opacity="0.95"/><rect x="216" y="373" width="1" height="27" fill-opacity="0.95"/><rect x="215" y="374" width="1" height="24" fill-opacity="0.22"/><rect x="217" y="399" width="1" height="30" fill-opacity="0.80"/><rect x="216" y="399" width="2" height="1" fill-opacity="0.50"/><rect x="218" y="373" width="3" height="1" fill-opacity="0.95"/><rect x="218" y="373" width="1" height="26" fill-opacity="0.60"/><rect x="220" y="373" width="1" height="30" fill-opacity="0.95"/><rect x="219" y="374" width="1" height="24" fill-opacity="0.22"/><rect x="221" y="402" width="1" height="27" fill-opacity="0.55"/><rect x="220" y="402" width="2" height="1" fill-opacity="0.50"/><rect x="219" y="400" width="1" height="27" fill-opacity="0.45"/><rect x="223" y="373" width="3" height="1" fill-opacity="0.95"/><rect x="223" y="373" width="1" height="27" fill-opacity="0.95"/><rect x="225" y="373" width="1" height="25" fill-opacity="0.95"/><rect x="224" y="374" width="1" height="22" fill-opacity="0.22"/><rect x="226" y="397" width="1" height="32" fill-opacity="0.55"/><rect x="225" y="397" width="2" height="1" fill-opacity="0.50"/><rect x="228" y="373" width="3" height="1" fill-opacity="0.95"/><rect x="228" y="373" width="1" height="29" fill-opacity="0.60"/><rect x="230" y="373" width="1" height="30" fill-opacity="0.95"/><rect x="229" y="374" width="1" height="22" fill-opacity="0.22"/><rect x="231" y="402" width="1" height="27" fill-opacity="0.95"/><rect x="230" y="402" width="2" height="1" fill-opacity="0.50"/><rect x="229" y="400" width="1" height="27" fill-opacity="0.45"/><rect x="232" y="373" width="3" height="1" fill-opacity="0.95"/><rect x="232" y="373" width="1" height="26" fill-opacity="0.60"/><rect x="234" y="373" width="1" height="28" fill-opacity="0.70"/><rect x="233" y="374" width="1" height="20" fill-opacity="0.22"/><rect x="235" y="400" width="1" height="29" fill-opacity="0.80"/><rect x="234" y="400" width="2" height="1" fill-opacity="0.50"/><rect x="233" y="400" width="1" height="27" fill-opacity="0.30"/><rect x="237" y="373" width="1" height="25" fill-opacity="0.90"/><rect x="238" y="397" width="1" height="51" fill-opacity="0.95"/><rect x="241" y="397" width="1" height="51" fill-opacity="0.90"/><rect x="238" y="447" width="4" height="1" fill-opacity="0.35"/><rect x="239" y="397" width="1" height="32" fill-opacity="0.50"/><rect x="242" y="397" width="1" height="27" fill-opacity="0.55"/><rect x="243" y="397" width="3" height="15" fill-opacity="0.40"/><rect x="244" y="397" width="1" height="15" fill-opacity="0.70"/><rect x="241" y="397" width="6" height="1" fill-opacity="0.45"/><rect x="246" y="373" width="1" height="25" fill-opacity="0.85"/><rect x="247" y="373" width="3" height="1" fill-opacity="0.95"/><rect x="247" y="373" width="1" height="31" fill-opacity="0.60"/><rect x="249" y="373" width="1" height="28" fill-opacity="0.70"/><rect x="248" y="374" width="1" height="27" fill-opacity="0.22"/><rect x="250" y="400" width="1" height="29" fill-opacity="0.80"/><rect x="249" y="400" width="2" height="1" fill-opacity="0.50"/><rect x="252" y="373" width="3" height="1" fill-opacity="0.95"/><rect x="252" y="373" width="1" height="29" fill-opacity="0.85"/><rect x="254" y="373" width="1" height="31" fill-opacity="0.70"/><rect x="253" y="374" width="1" height="27" fill-opacity="0.22"/><rect x="255" y="403" width="1" height="26" fill-opacity="0.55"/><rect x="254" y="403" width="2" height="1" fill-opacity="0.50"/><rect x="253" y="400" width="1" height="28" fill-opacity="0.60"/><rect x="256" y="373" width="3" height="1" fill-opacity="0.95"/><rect x="256" y="373" width="1" height="31" fill-opacity="0.95"/><rect x="258" y="373" width="1" height="26" fill-opacity="0.95"/><rect x="257" y="374" width="1" height="20" fill-opacity="0.22"/><rect x="259" y="398" width="1" height="31" fill-opacity="0.55"/><rect x="258" y="398" width="2" height="1" fill-opacity="0.50"/><rect x="257" y="400" width="1" height="27" fill-opacity="0.45"/><rect x="261" y="373" width="3" height="1" fill-opacity="0.95"/><rect x="261" y="373" width="1" height="30" fill-opacity="0.95"/><rect x="263" y="373" width="1" height="31" fill-opacity="0.50"/><rect x="262" y="374" width="1" height="22" fill-opacity="0.22"/><rect x="264" y="403" width="1" height="26" fill-opacity="0.55"/><rect x="263" y="403" width="2" height="1" fill-opacity="0.50"/><rect x="262" y="400" width="1" height="29" fill-opacity="0.30"/><rect x="266" y="373" width="3" height="1" fill-opacity="0.95"/><rect x="266" y="373" width="1" height="29" fill-opacity="0.85"/><rect x="268" y="373" width="1" height="27" fill-opacity="0.50"/><rect x="267" y="374" width="1" height="25" fill-opacity="0.22"/><rect x="269" y="399" width="1" height="30" fill-opacity="0.55"/><rect x="268" y="399" width="2" height="1" fill-opacity="0.50"/><rect x="267" y="400" width="1" height="29" fill-opacity="0.45"/><rect x="271" y="373" width="3" height="1" fill-opacity="0.95"/><rect x="271" y="373" width="1" height="27" fill-opacity="0.60"/><rect x="273" y="373" width="1" height="26" fill-opacity="0.70"/><rect x="272" y="374" width="1" height="26" fill-opacity="0.22"/><rect x="274" y="398" width="1" height="31" fill-opacity="0.80"/><rect x="273" y="398" width="2" height="1" fill-opacity="0.50"/><rect x="272" y="400" width="1" height="27" fill-opacity="0.45"/><rect x="275" y="373" width="3" height="1" fill-opacity="0.95"/><rect x="275" y="373" width="1" height="25" fill-opacity="0.95"/><rect x="277" y="373" width="1" height="25" fill-opacity="0.50"/><rect x="276" y="374" width="1" height="19" fill-opacity="0.22"/><rect x="278" y="397" width="1" height="32" fill-opacity="0.55"/><rect x="277" y="397" width="2" height="1" fill-opacity="0.50"/><rect x="276" y="400" width="1" height="27" fill-opacity="0.45"/><rect x="280" y="373" width="3" height="1" fill-opacity="0.95"/><rect x="280" y="373" width="1" height="28" fill-opacity="0.85"/><rect x="282" y="373" width="1" height="26" fill-opacity="0.50"/><rect x="281" y="374" width="1" height="27" fill-opacity="0.22"/><rect x="283" y="398" width="1" height="31" fill-opacity="0.80"/><rect x="282" y="398" width="2" height="1" fill-opacity="0.50"/><rect x="281" y="400" width="1" height="26" fill-opacity="0.45"/><rect x="277" y="373" width="1" height="75" fill-opacity="0.90"/><rect x="286" y="373" width="1" height="75" fill-opacity="0.85"/><rect x="287" y="428" width="1" height="20" fill-opacity="0.45"/><rect x="289" y="373" width="1" height="75" fill-opacity="0.95"/><rect x="289" y="447" width="9" height="1" fill-opacity="0.80"/><rect x="298" y="373" width="1" height="75" fill-opacity="0.95"/><rect x="299" y="373" width="4" height="1" fill-opacity="0.95"/><rect x="299" y="373" width="1" height="73" fill-opacity="0.95"/><rect x="302" y="373" width="1" height="39" fill-opacity="0.95"/><rect x="300" y="374" width="2" height="34" fill-opacity="0.25"/><rect x="302" y="411" width="3" height="1" fill-opacity="0.45"/><rect x="304" y="373" width="4" height="1" fill-opacity="0.95"/><rect x="304" y="373" width="1" height="73" fill-opacity="0.95"/><rect x="307" y="373" width="1" height="38" fill-opacity="0.80"/><rect x="305" y="374" width="2" height="37" fill-opacity="0.25"/><rect x="307" y="410" width="3" height="1" fill-opacity="0.45"/><rect x="309" y="373" width="4" height="1" fill-opacity="0.95"/><rect x="309" y="373" width="1" height="73" fill-opacity="0.60"/><rect x="312" y="373" width="1" height="38" fill-opacity="0.80"/><rect x="310" y="374" width="2" height="34" fill-opacity="0.25"/><rect x="312" y="410" width="3" height="1" fill-opacity="0.45"/><rect x="310" y="373" width="1" height="66" fill-opacity="0.40"/><rect x="315" y="373" width="4" height="1" fill-opacity="0.95"/><rect x="315" y="373" width="1" height="73" fill-opacity="0.95"/><rect x="318" y="373" width="1" height="38" fill-opacity="0.55"/><rect x="316" y="374" width="2" height="37" fill-opacity="0.25"/><rect x="320" y="373" width="4" height="1" fill-opacity="0.95"/><rect x="320" y="373" width="1" height="72" fill-opacity="0.95"/><rect x="323" y="373" width="1" height="35" fill-opacity="0.80"/><rect x="321" y="374" width="2" height="32" fill-opacity="0.25"/><rect x="323" y="407" width="3" height="1" fill-opacity="0.45"/><rect x="325" y="373" width="4" height="1" fill-opacity="0.95"/><rect x="325" y="373" width="1" height="72" fill-opacity="0.95"/><rect x="328" y="373" width="1" height="37" fill-opacity="0.55"/><rect x="326" y="374" width="2" height="38" fill-opacity="0.25"/><rect x="330" y="373" width="4" height="1" fill-opacity="0.95"/><rect x="330" y="373" width="1" height="72" fill-opacity="0.90"/><rect x="333" y="373" width="1" height="37" fill-opacity="0.55"/><rect x="331" y="374" width="2" height="34" fill-opacity="0.25"/><rect x="331" y="373" width="1" height="70" fill-opacity="0.40"/><rect x="335" y="373" width="4" height="1" fill-opacity="0.95"/><rect x="335" y="373" width="1" height="74" fill-opacity="0.90"/><rect x="338" y="373" width="1" height="39" fill-opacity="0.80"/><rect x="336" y="374" width="2" height="35" fill-opacity="0.25"/><rect x="341" y="373" width="4" height="1" fill-opacity="0.95"/><rect x="341" y="373" width="1" height="72" fill-opacity="0.90"/><rect x="344" y="373" width="1" height="37" fill-opacity="0.55"/><rect x="342" y="374" width="2" height="33" fill-opacity="0.25"/><rect x="346" y="373" width="4" height="1" fill-opacity="0.95"/><rect x="346" y="373" width="1" height="72" fill-opacity="0.95"/><rect x="349" y="373" width="1" height="38" fill-opacity="0.80"/><rect x="347" y="374" width="2" height="34" fill-opacity="0.25"/><rect x="349" y="410" width="3" height="1" fill-opacity="0.45"/><rect x="351" y="373" width="4" height="1" fill-opacity="0.95"/><rect x="351" y="373" width="1" height="73" fill-opacity="0.95"/><rect x="354" y="373" width="1" height="37" fill-opacity="0.80"/><rect x="352" y="374" width="2" height="34" fill-opacity="0.25"/><rect x="356" y="373" width="4" height="1" fill-opacity="0.95"/><rect x="356" y="373" width="1" height="71" fill-opacity="0.95"/><rect x="359" y="373" width="1" height="39" fill-opacity="0.55"/><rect x="357" y="374" width="2" height="32" fill-opacity="0.25"/><rect x="361" y="373" width="4" height="1" fill-opacity="0.95"/><rect x="361" y="373" width="1" height="72" fill-opacity="0.60"/><rect x="364" y="373" width="1" height="35" fill-opacity="0.95"/><rect x="362" y="374" width="2" height="34" fill-opacity="0.25"/><rect x="364" y="407" width="3" height="1" fill-opacity="0.45"/><rect x="367" y="373" width="4" height="1" fill-opacity="0.95"/><rect x="367" y="373" width="1" height="73" fill-opacity="0.95"/><rect x="370" y="373" width="1" height="36" fill-opacity="0.55"/><rect x="368" y="374" width="2" height="37" fill-opacity="0.25"/><rect x="372" y="373" width="4" height="1" fill-opacity="0.95"/><rect x="372" y="373" width="1" height="73" fill-opacity="0.95"/><rect x="375" y="373" width="1" height="36" fill-opacity="0.95"/><rect x="373" y="374" width="2" height="32" fill-opacity="0.25"/><rect x="377" y="373" width="4" height="1" fill-opacity="0.95"/><rect x="377" y="373" width="1" height="74" fill-opacity="0.90"/><rect x="380" y="373" width="1" height="38" fill-opacity="0.80"/><rect x="378" y="374" width="2" height="33" fill-opacity="0.25"/><rect x="378" y="373" width="1" height="69" fill-opacity="0.40"/><rect x="384" y="447" width="5" height="1" fill-opacity="0.72"/><rect x="384" y="373" width="1" height="75" fill-opacity="0.90"/><rect x="388" y="373" width="1" height="75" fill-opacity="0.72"/><rect x="385" y="410" width="3" height="38" fill-opacity="0.22"/><rect x="390" y="447" width="4" height="1" fill-opacity="0.56"/><rect x="390" y="373" width="1" height="75" fill-opacity="0.70"/><rect x="393" y="373" width="1" height="75" fill-opacity="0.56"/><rect x="391" y="410" width="2" height="38" fill-opacity="0.22"/><rect x="396" y="447" width="4" height="1" fill-opacity="0.68"/><rect x="396" y="373" width="1" height="75" fill-opacity="0.85"/><rect x="399" y="373" width="1" height="75" fill-opacity="0.68"/><rect x="397" y="410" width="2" height="38" fill-opacity="0.22"/><rect x="388" y="373" width="3" height="1" fill-opacity="0.60"/><rect x="393" y="373" width="4" height="1" fill-opacity="0.60"/><rect x="399" y="367" width="1" height="7" fill-opacity="0.80"/><rect x="401" y="410" width="1" height="38" fill-opacity="0.95"/><rect x="400" y="373" width="1" height="38" fill-opacity="0.60"/><rect x="401" y="447" width="302" height="1" fill-opacity="0.90"/><rect x="456" y="446" width="1" height="2" fill-opacity="0.45"/><rect x="458" y="447" width="1" height="2" fill-opacity="0.35"/><rect x="503" y="446" width="1" height="2" fill-opacity="0.45"/><rect x="505" y="447" width="1" height="2" fill-opacity="0.35"/><rect x="546" y="446" width="1" height="2" fill-opacity="0.45"/><rect x="548" y="447" width="1" height="2" fill-opacity="0.35"/><rect x="591" y="446" width="1" height="2" fill-opacity="0.45"/><rect x="593" y="447" width="1" height="2" fill-opacity="0.35"/><rect x="643" y="446" width="1" height="2" fill-opacity="0.45"/><rect x="645" y="447" width="1" height="2" fill-opacity="0.35"/><rect x="696" y="446" width="1" height="2" fill-opacity="0.45"/><rect x="698" y="447" width="1" height="2" fill-opacity="0.35"/></g><line x1="196.5" y1="99" x2="196.5" y2="486" stroke="#e02424" stroke-width="1" stroke-dasharray="3 2.15"/><line x1="473.5" y1="99" x2="473.5" y2="486" stroke="#dce4f2" stroke-width="1" stroke-dasharray="3 2.15"/></svg>
<div style="position:absolute;left:10px;top:290px;width:693px;height:4px;background:#ffffff"></div>
<div style="position:absolute;left:187.60px;top:278.10px;font:normal 12px/12px 'Liberation Sans', sans-serif;color:#d82828;white-space:nowrap;">A</div>
<div style="position:absolute;left:464.50px;top:277.90px;font:normal 12px/12px 'Liberation Sans', sans-serif;color:#c0cce0;white-space:nowrap;">B</div>
</div></body></html>
